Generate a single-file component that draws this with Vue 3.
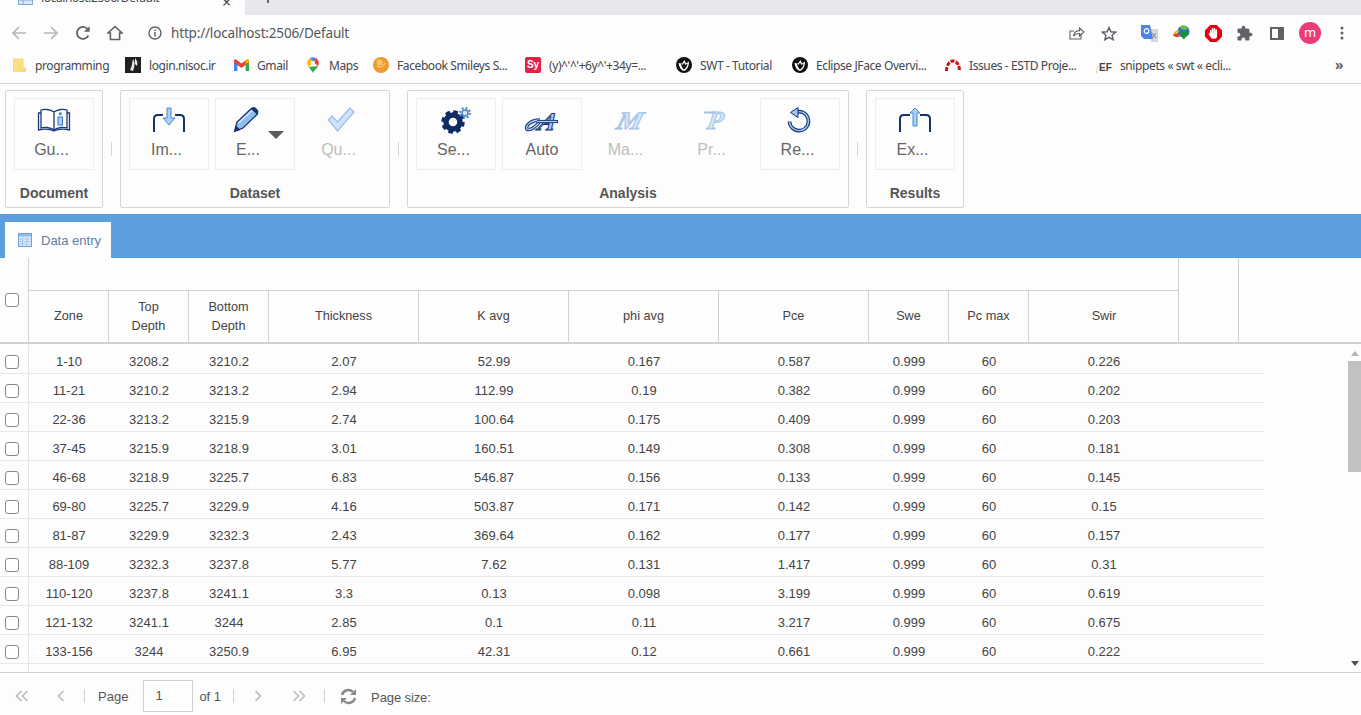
<template>
  <div class="page">
    <!-- browser chrome -->
    <div class="tabstrip">
      <div class="tab">
        <svg class="tab-fav" width="15" height="14" viewBox="0 0 15 14"><rect x="0.5" y="0.5" width="14" height="13" fill="#dbe9f8" stroke="#7fa9d8"/><path d="M5 1v12M1 5h13M1 9h13" stroke="#7fa9d8"/></svg>
        <span class="tab-title">localhost:2506/Default</span>
        <span class="tab-x">×</span>
      </div>
      <span class="tab-plus"></span>
    </div>

    <div class="toolbar">
      <svg class="tb back" width="16" height="16" viewBox="0 0 16 16"><path d="M15 8H2M8 2 2 8l6 6" fill="none" stroke="#b4b6b9" stroke-width="1.7"/></svg>
      <svg class="tb fwd" width="16" height="16" viewBox="0 0 16 16"><path d="M1 8h13M8 2l6 6-6 6" fill="none" stroke="#b4b6b9" stroke-width="1.7"/></svg>
      <svg class="tb reload" width="16" height="16" viewBox="0 0 16 16"><path d="M13.4 10.5A6 6 0 1 1 12.6 4" fill="none" stroke="#5f6368" stroke-width="1.8"/><path d="M14.6 1.2v5.6H9z" fill="#5f6368"/></svg>
      <svg class="tb home" width="16" height="16" viewBox="0 0 16 16"><path d="M8 1.5 1 8h2.4v6.5h9.2V8H15z" fill="none" stroke="#5f6368" stroke-width="1.6"/></svg>
      <svg class="tb info" width="14" height="14" viewBox="0 0 14 14"><circle cx="7" cy="7" r="6" fill="none" stroke="#5f6368" stroke-width="1.4"/><path d="M7 6v4.4M7 3.4v1.5" stroke="#5f6368" stroke-width="1.5"/></svg>
      <span class="url">http://localhost:2506/Default</span>
      <svg class="tb share" width="16" height="14" viewBox="0 0 16 14"><path d="M12 7.5v5.5H1V5h4" fill="none" stroke="#5f6368" stroke-width="1.1"/><path d="M4.5 10C5 6.5 7.5 4.6 10.5 4.6V2L15 6l-4.500 4V7.500C8.500 7.500 6 8 4.500 10z" fill="none" stroke="#5f6368" stroke-width="1.1"/></svg>
      <svg class="tb star" width="16" height="15" viewBox="0 0 16 15"><path d="m8 1.500 1.900 4.200 4.600.5-3.400 3 1 4.500L8 11.400l-4.100 2.300 1-4.500-3.400-3 4.600-.5z" fill="none" stroke="#5f6368" stroke-width="1.5"/></svg>
      <svg class="tb trans" width="17" height="17" viewBox="0 0 17 17"><path d="M7 4h10v13H10z" fill="#d4d6da"/><path d="M0 0h9l3 14H3L0 11z" fill="#4a86e8"/><circle cx="5.500" cy="6" r="2.300" fill="none" stroke="#fff" stroke-width="1.200"/><path d="M11 8l4 5M15 8l-4 5" stroke="#808488"/></svg>
      <svg class="tb idm" width="17" height="16" viewBox="0 0 17 16"><circle cx="10.500" cy="6.500" r="6" fill="#2b74b8"/><path d="M7 2c2-2 6-2 8 1l-3 2-4-1z" fill="#6fbe3c"/><path d="M0 10c1-4 4-5.500 7-4.500L5 7C3.500 7 2 8.500 2 10z" fill="#e4b422"/><path d="M0 10.500C2 8 4 8 6 8.500l.5 3C4 12.500 2 12 0 10.500z" fill="#d8482a"/><path d="M7 7h9l-5 7.500L9 12.500l-.5-3z" fill="#1f8f33"/></svg>
      <svg class="tb block" width="17" height="17" viewBox="0 0 17 17"><path d="M5.300 0h6.400L17 5.300v6.400L11.700 17H5.300L0 11.700V5.300z" fill="#e3000f"/><path d="M5.700 8V5.500M7.600 8V3.800M9.500 8V3.800M11.300 8.500V5" stroke="#fff" stroke-width="1.600" stroke-linecap="round"/><path d="M4.900 7.500h7.200v3.500a2.800 2.800 0 0 1-2.800 2.800H8c-1.200 0-2-.8-2.600-2l-2-2.800 1-.6z" fill="#fff"/></svg>
      <svg class="tb puzzle" width="17" height="17" viewBox="0 0 24 24"><path d="M20.500 11H19V7c0-1.100-.9-2-2-2h-4V3.500C13 2.120 11.880 1 10.500 1S8 2.120 8 3.500V5H4c-1.100 0-1.990.9-1.990 2v3.800H3.500c1.490 0 2.700 1.210 2.700 2.700s-1.210 2.700-2.700 2.700H2V20c0 1.100.9 2 2 2h3.800v-1.500c0-1.490 1.210-2.700 2.700-2.700 1.490 0 2.700 1.210 2.700 2.700V22H17c1.100 0 2-.9 2-2v-4h1.500c1.380 0 2.500-1.120 2.500-2.500S21.880 11 20.500 11z" fill="#5f6368"/></svg>
      <svg class="tb panel" width="14" height="13" viewBox="0 0 14 13"><rect x="1" y="1" width="12" height="11" fill="none" stroke="#5f6368" stroke-width="2"/><rect x="8" y="1" width="5" height="11" fill="#5f6368"/></svg>
      <span class="avatar">m</span>
      <svg class="tb dots" width="4" height="14" viewBox="0 0 4 14"><circle cx="2" cy="2" r="1.500" fill="#5f6368"/><circle cx="2" cy="7" r="1.500" fill="#5f6368"/><circle cx="2" cy="12" r="1.500" fill="#5f6368"/></svg>
    </div>

    <div class="bookmarks">
      <div v-for="b in bookmarks" :key="b.label" class="bm" :style="{ width: b.w + 'px' }">
        <span class="bm-icon">
          <svg v-if="b.icon === 'folder'" width="13" height="14" viewBox="0 0 13 14"><path d="M0 1h10v9h3v4H0z" fill="#fbe083" stroke="#efc968" stroke-width=".6"/></svg>
          <svg v-else-if="b.icon === 'nisoc'" width="16" height="16" viewBox="0 0 16 16"><rect width="16" height="16" fill="#1f2020"/><path d="M8 2c2 3 2 6 0 12l-3-1c2-3 2-7 3-11zM10 1c2 2 3 5 2 8l-2-2z" fill="#e8e8e8"/></svg>
          <svg v-else-if="b.icon === 'gmail'" width="15" height="12" viewBox="0 0 15 12"><path d="M0 3v9h3.400V5z" fill="#4285f4"/><path d="M11.600 5v7H15V3z" fill="#34a853"/><path d="M0 1v2.500l7.500 5.500L15 3.500V1l-1.500-1-6 4.500L1.500 0z" fill="#ea4335"/><path d="M11.600 2v3L15 3V1l-1.500-1z" fill="#fbbc04"/></svg>
          <svg v-else-if="b.icon === 'maps'" width="12" height="16" viewBox="0 0 12 16"><path d="M6 16C4.500 12 0 9.500 0 6a6 6 0 0 1 3-5l3 4-4 5z" fill="#fbbc04"/><path d="M3 1a6 6 0 0 1 6 0L6 5z" fill="#4285f4"/><path d="M9 1a6 6 0 0 1 2 8L6 5z" fill="#ea4335"/><path d="M2 10l9-1c-1 3-4 4-5 7-1-2-3-4-4-6z" fill="#34a853"/><circle cx="6" cy="5.800" r="2" fill="#fff"/></svg>
          <svg v-else-if="b.icon === 'smile'" width="16" height="16" viewBox="0 0 16 16"><circle cx="8" cy="8" r="8" fill="#f09a2e"/><circle cx="6.500" cy="5.500" r="3" fill="#f8c668"/><path d="M4 9c3 2 6 1 8-3" fill="none" stroke="#fde8b8" stroke-width="1"/></svg>
          <span v-else-if="b.icon === 'sy'" class="sy">Sy</span>
          <svg v-else-if="b.icon === 'eclipse'" width="16" height="16" viewBox="0 0 16 16"><circle cx="8" cy="8" r="8" fill="#111"/><path d="M2.500 6c.5 4 2.500 7 5.500 8 2.500-1 5-4 5-9.500L10 6.500 8.500 3 6 6.500z" fill="#fff"/><path d="M4.500 6c1 3 2 5.500 3.500 6.500 2-1.500 3.500-3.500 3.500-6L9.500 8 8 5.500 6.500 8z" fill="#111"/></svg>
          <svg v-else-if="b.icon === 'redmine'" width="16" height="14" viewBox="0 0 16 14"><path d="M1.500 13c0-6 3-10 6.500-10s6.500 4 6.500 10" fill="none" stroke="#c4161c" stroke-width="3" stroke-dasharray="4 1.300"/></svg>
          <span v-else-if="b.icon === 'ef'" class="ef">EF</span>
        </span>
        <span class="bm-label">{{ b.label }}</span>
      </div>
      <span class="bm-more">»</span>
    </div>

    <!-- ribbon -->
    <div class="ribbon">
      <section class="group">
        <div class="group-btns">
          <button class="rbtn">
            <svg class="ico" width="34" height="26" viewBox="0 0 34 26"><path d="M17 5C13 2 7 2 4 3v18c3-1 9-1 13 2 4-3 10-3 13-2V3c-3-1-9-1-13 2zM17 5v18" fill="none" stroke="#1c3a78" stroke-width="1.300"/><path d="M4 6H1.500v17C6 22 13 22 17 24c4-2 11-2 15.500-1V6H30" fill="none" stroke="#1c3a78" stroke-width="1.300"/><rect x="21" y="10" width="4.500" height="8" fill="#a9cdf2" stroke="#3f74ba"/><rect x="22" y="5.500" width="2.500" height="2.500" fill="#3f74ba"/></svg>
            <span class="cut">Gu...</span>
          </button>
        </div>
        <div class="group-name">Document</div>
      </section>
      <span class="rsep"></span>

      <section class="group">
        <div class="group-btns">
          <button class="rbtn">
            <svg class="ico" width="34" height="26" viewBox="0 0 34 26"><path d="M2 25V12q0-4 4-4h5M32 25V12q0-4-4-4h-5" fill="none" stroke="#16326e" stroke-width="2"/><path d="M15 1h4v10h4l-6 7-6-7h4z" fill="#a9d0f5" stroke="#4a8ad0"/></svg>
            <span class="cut">Im...</span>
          </button>
          <button class="rbtn">
            <svg class="ico pencil" width="28" height="26" viewBox="0 0 28 26"><path d="M1.500 24.500 4 15 18.500 1.500l6 5.500L10 21z" fill="#8fbdf0" stroke="#16326e" stroke-width="1.300"/><path d="M18.500 1.500c2-1.500 3.500-1 5 .5s2 3 .5 5" fill="#16326e" stroke="#16326e"/><path d="M1.500 24.500 3 18.500l4.500 4.500z" fill="#16326e"/><path d="M5.500 16 19 3.500" stroke="#d6e8fb" stroke-width="1.500"/></svg>
            <span class="cut-menu">E...</span>
            <span class="caret"></span>
          </button>
          <button class="rbtn off">
            <svg class="ico" width="28" height="26" viewBox="0 0 28 26"><path d="M1.500 13 5 9l5.500 6L23 1l4 4-16.500 19z" fill="#d0e4fa" stroke="#9fbfe6" stroke-width="1.300"/></svg>
            <span class="cut">Qu...</span>
          </button>
        </div>
        <div class="group-name">Dataset</div>
      </section>
      <span class="rsep"></span>

      <section class="group">
        <div class="group-btns">
          <button class="rbtn">
            <svg class="ico" width="34" height="26" viewBox="0 0 34 26"><circle cx="14" cy="15" r="7" fill="none" stroke="#0e2a63" stroke-width="5.500"/><circle cx="14" cy="15" r="10" fill="none" stroke="#0e2a63" stroke-width="3.500" stroke-dasharray="4.500 3.350"/><circle cx="26" cy="6" r="3" fill="#d6e8fb" stroke="#4a7fc0" stroke-width="1.500"/><circle cx="26" cy="6" r="5" fill="none" stroke="#4a7fc0" stroke-width="1.800" stroke-dasharray="2 1.900"/></svg>
            <span class="cut">Se...</span>
          </button>
          <button class="rbtn">
            <svg class="ico" width="36" height="26" viewBox="0 0 36 26"><path d="M16 13C8 13 1 18 3 22c3 2 9-2 13-8" fill="none" stroke="#16326e" stroke-width="3.400"/><path d="M16 13C8 13 1 18 3 22c3 2 9-2 13-8" fill="none" stroke="#a9d0f5" stroke-width="1.400"/><g transform="translate(21 23) skewX(-22)"><text x="0" y="0" class="script" font-size="25" text-anchor="middle" fill="#a9d0f5" stroke="#16326e" stroke-width="1">A</text></g><path d="M13 14.500h21" stroke="#16326e" stroke-width="3.200"/><path d="M13 14.500h20" stroke="#a9d0f5" stroke-width="1.300"/></svg>
            <span>Auto</span>
          </button>
          <button class="rbtn off">
            <svg class="ico" width="36" height="26" viewBox="0 0 36 26"><g transform="translate(18 22) skewX(-14) scale(1.150 1)"><text x="0" y="0" class="script" font-size="25" text-anchor="middle" fill="#d5e6f9" stroke="#a3c1e6" stroke-width="1">M</text></g></svg>
            <span class="cut">Ma...</span>
          </button>
          <button class="rbtn off">
            <svg class="ico" width="36" height="26" viewBox="0 0 36 26"><g transform="translate(18 22) skewX(-10)"><text x="0" y="0" class="script" font-size="26" text-anchor="middle" fill="#d5e6f9" stroke="#a3c1e6" stroke-width="1">P</text></g><path d="M8 5.500h12" stroke="#a3c1e6" stroke-width="2"/></svg>
            <span class="cut">Pr...</span>
          </button>
          <button class="rbtn">
            <svg class="ico" width="26" height="26" viewBox="0 0 26 26"><path d="M8 5.500a9.500 9.500 0 1 1-5.500 9" fill="none" stroke="#16326e" stroke-width="3.600"/><path d="M8 5.500a9.500 9.500 0 1 1-5.500 9" fill="none" stroke="#9cc6f2" stroke-width="1.400"/><path d="M11 .5v10L3.500 5.500z" fill="#9cc6f2" stroke="#16326e"/></svg>
            <span class="cut">Re...</span>
          </button>
        </div>
        <div class="group-name">Analysis</div>
      </section>
      <span class="rsep"></span>

      <section class="group">
        <div class="group-btns">
          <button class="rbtn">
            <svg class="ico" width="34" height="26" viewBox="0 0 34 26"><path d="M2 25V12q0-4 4-4h6M32 25V12q0-4-4-4h-6" fill="none" stroke="#16326e" stroke-width="2"/><path d="M17 1l5 5h-3v13h-4V6h-3z" fill="#a9d0f5" stroke="#4a8ad0"/></svg>
            <span class="cut">Ex...</span>
          </button>
        </div>
        <div class="group-name">Results</div>
      </section>
    </div>

    <!-- tabs -->
    <div class="tabbar">
      <div class="dtab">
        <svg width="14" height="14" viewBox="0 0 14 14"><rect x=".5" y=".5" width="13" height="13" fill="#dcebf9" stroke="#6ba4dc"/><rect x="1" y="1" width="12" height="2.500" fill="#8fbdea"/><path d="M1 6h12M1 8.500h12M1 11h12M4.500 3.500V13M9 3.500V13" stroke="#9ec4ea" stroke-width=".8"/></svg>
        <span>Data entry</span>
      </div>
    </div>

    <!-- grid head -->
    <div class="head">
      <div class="head-check"><span class="check"></span></div>
      <div class="head-main">
        <div class="head-band"></div>
        <div class="cols head-cols">
          <div v-for="c in columns" :key="c" class="hcell">{{ c }}</div>
        </div>
      </div>
      <div class="head-extra"></div>
      <div class="head-rest"></div>
    </div>

    <!-- grid body -->
    <div class="body">
      <div class="rows">
        <div v-for="r in rows" :key="r[0]" class="row">
          <div class="row-check"><span class="check"></span></div>
          <div class="cols">
            <div v-for="(v, i) in r" :key="i" class="cell">{{ v }}</div>
          </div>
        </div>
        <div class="row-tail"></div>
      </div>
      <div class="scroll">
        <span class="arrow-up"></span>
        <span class="thumb"></span>
        <span class="arrow-down"></span>
      </div>
    </div>

    <!-- pager -->
    <div class="pager">
      <svg class="pg first" width="14" height="12" viewBox="0 0 14 12"><path d="M6.500 1 1.500 6l5 5M12.500 1l-5 5 5 5" fill="none" stroke="#bdbdbd" stroke-width="1.700"/></svg>
      <svg class="pg prev" width="8" height="12" viewBox="0 0 8 12"><path d="M6.500 1l-5 5 5 5" fill="none" stroke="#bdbdbd" stroke-width="1.700"/></svg>
      <span class="psep s1"></span>
      <span class="ptext page-l">Page</span>
      <span class="pinput">1</span>
      <span class="ptext of">of 1</span>
      <span class="psep s2"></span>
      <svg class="pg next" width="8" height="12" viewBox="0 0 8 12"><path d="M1.500 1l5 5-5 5" fill="none" stroke="#bdbdbd" stroke-width="1.700"/></svg>
      <svg class="pg last" width="14" height="12" viewBox="0 0 14 12"><path d="M1.500 1l5 5-5 5M7.500 1l5 5-5 5" fill="none" stroke="#bdbdbd" stroke-width="1.700"/></svg>
      <span class="psep s3"></span>
      <svg class="pg refresh" width="17" height="17" viewBox="0 0 17 17"><path d="M2 7a6.500 6.500 0 0 1 11-3" fill="none" stroke="#8a8a8a" stroke-width="2.400"/><path d="M16 1v6h-6z" fill="#8a8a8a"/><path d="M15 10a6.500 6.500 0 0 1-11 3" fill="none" stroke="#8a8a8a" stroke-width="2.400"/><path d="M1 16v-6h6z" fill="#8a8a8a"/></svg>
      <span class="ptext size">Page size:</span>
    </div>
  </div>
</template>

<script setup>
const bookmarks = [
  { icon: 'folder', label: 'programming', w: 112 },
  { icon: 'nisoc', label: 'login.nisoc.ir', w: 108 },
  { icon: 'gmail', label: 'Gmail', w: 72 },
  { icon: 'maps', label: 'Maps', w: 68 },
  { icon: 'smile', label: 'Facebook Smileys S...', w: 152 },
  { icon: 'sy', label: "(y)^'^'+6y^'+34y=...", w: 151 },
  { icon: 'eclipse', label: 'SWT - Tutorial', w: 116 },
  { icon: 'eclipse', label: 'Eclipse JFace Overvi...', w: 153 },
  { icon: 'redmine', label: 'Issues - ESTD Proje...', w: 151 },
  { icon: 'ef', label: 'snippets « swt « ecli...', w: 180 },
]

const columns = ['Zone', 'Top Depth', 'Bottom Depth', 'Thickness', 'K avg', 'phi avg', 'Pce', 'Swe', 'Pc max', 'Swir']

const rows = [
  ['1-10', '3208.2', '3210.2', '2.07', '52.99', '0.167', '0.587', '0.999', '60', '0.226'],
  ['11-21', '3210.2', '3213.2', '2.94', '112.99', '0.19', '0.382', '0.999', '60', '0.202'],
  ['22-36', '3213.2', '3215.9', '2.74', '100.64', '0.175', '0.409', '0.999', '60', '0.203'],
  ['37-45', '3215.9', '3218.9', '3.01', '160.51', '0.149', '0.308', '0.999', '60', '0.181'],
  ['46-68', '3218.9', '3225.7', '6.83', '546.87', '0.156', '0.133', '0.999', '60', '0.145'],
  ['69-80', '3225.7', '3229.9', '4.16', '503.87', '0.171', '0.142', '0.999', '60', '0.15'],
  ['81-87', '3229.9', '3232.3', '2.43', '369.64', '0.162', '0.177', '0.999', '60', '0.157'],
  ['88-109', '3232.3', '3237.8', '5.77', '7.62', '0.131', '1.417', '0.999', '60', '0.31'],
  ['110-120', '3237.8', '3241.1', '3.3', '0.13', '0.098', '3.199', '0.999', '60', '0.619'],
  ['121-132', '3241.1', '3244', '2.85', '0.1', '0.11', '3.217', '0.999', '60', '0.675'],
  ['133-156', '3244', '3250.9', '6.95', '42.31', '0.12', '0.661', '0.999', '60', '0.222'],
]
</script>

<style>
html, body { margin: 0; background: #fdfdfd; overflow: hidden; }
</style>

<style scoped>
.page {
  height: 715px;
  display: flex;
  flex-direction: column;
  background: #fdfdfd;
  font-family: "Liberation Sans", Arial, sans-serif;
  color: #444;
  overflow: hidden;
}

/* browser chrome */
.tabstrip {
  height: 15px;
  flex: none;
  display: flex;
  background: #e7e8eb;
  overflow: hidden;
}
.tab {
  width: 245px;
  height: 15px;
  background: #fdfdfd;
  display: flex;
  align-items: flex-start;
  font: 12px "Noto Sans", sans-serif;
  letter-spacing: -.4px;
  color: #45484d;
  position: relative;
}
.tab-fav { margin: -9px 0 0 18px; flex: none; }
.tab-title { margin: -11px 0 0 8px; width: 181px; flex: none; white-space: nowrap; }
.tab-x { margin: -9px 0 0 0; font-size: 16px; }
.tab-plus { width: 1.5px; height: 3px; margin-left: 22px; background: #5f6368; }

.toolbar {
  height: 32px;
  flex: none;
  box-sizing: border-box;
  padding-top: 4px;
  display: flex;
  align-items: center;
  background: #fdfdfd;
}
.tb { flex: none; }
.back { margin-left: 11px; }
.fwd { margin-left: 16px; }
.reload { margin-left: 16px; }
.home { margin-left: 16px; }
.info { margin-left: 25px; }
.url {
  margin-left: 9px;
  width: 898px;
  flex: none;
  font: 13.5px "Noto Sans", sans-serif;
  letter-spacing: -.17px;
  color: #54575c;
  white-space: nowrap;
}
.share { margin-left: 0; }
.star { margin-left: 16px; }
.trans { margin-left: 24px; }
.idm { margin-left: 15px; }
.block { margin-left: 15px; }
.puzzle { margin-left: 14px; }
.panel { margin-left: 17px; }
.avatar {
  margin-left: 15px;
  width: 22px;
  height: 22px;
  flex: none;
  border-radius: 50%;
  background: #ec3b76;
  color: #fff;
  font: 13px/21px "Noto Sans", sans-serif;
  text-align: center;
}
.dots { margin-left: 19px; }

.bookmarks {
  height: 36px;
  flex: none;
  padding-left: 13px;
  display: flex;
  align-items: center;
  border-bottom: 1px solid #d2d2d2;
  background: #fdfdfd;
  position: relative;
}
.bm {
  flex: none;
  display: flex;
  align-items: center;
  font: 12px "Noto Sans", sans-serif;
  letter-spacing: -.4px;
  color: #44474c;
  white-space: nowrap;
}
.bm-icon {
  width: 16px;
  height: 16px;
  flex: none;
  margin-right: 8px;
  display: flex;
  align-items: center;
  justify-content: center;
}
.bm:first-child .bm-icon { width: 13px; margin-right: 9px; }
.sy {
  width: 16px;
  height: 16px;
  background: #e2204a;
  border-radius: 2px;
  color: #fff;
  font: bold 10px/16px "Liberation Sans", sans-serif;
  letter-spacing: 0;
  text-align: center;
}
.ef {
  font: bold 10px "Liberation Sans", sans-serif;
  letter-spacing: 0;
  color: #444;
  border-top-left-radius: 10px;
  border-left: 1px solid #f0c080;
  padding-left: 2px;
  margin-top: 4px;
}
.bm-more {
  position: absolute;
  left: 1335px;
  top: 8px;
  font: bold 14px "Noto Sans", sans-serif;
  color: #5f6368;
}

/* ribbon */
.ribbon {
  height: 130px;
  flex: none;
  box-sizing: border-box;
  padding: 6px 0 0 5px;
  display: flex;
  align-items: flex-start;
}
.group {
  height: 118px;
  box-sizing: border-box;
  border: 1px solid #d6d6d6;
  border-radius: 2px;
  padding: 7px 8px 0;
}
.group-btns { display: flex; gap: 6px; }
.group-name {
  margin-top: 15px;
  text-align: center;
  font-size: 14px;
  font-weight: bold;
  line-height: 16px;
  color: #555;
}
.rsep {
  width: 1px;
  height: 14px;
  margin: 52px 8px 0;
  background: #d6d6d6;
}
.rbtn {
  width: 80px;
  height: 72px;
  box-sizing: border-box;
  padding: 8px 0 0;
  border: 1px solid #ededed;
  background: transparent;
  display: flex;
  flex-direction: column;
  align-items: center;
  position: relative;
  font: 16px/18px "Liberation Sans", Arial, sans-serif;
  color: #666;
}
.rbtn.off { border-color: transparent; color: #bdbdbd; }
.cut { margin-right: 5px; }
.cut-menu { margin-right: 14px; }
.ico { height: 26px; margin-bottom: 8px; flex: none; overflow: visible; }
.pencil { margin-right: 17px; }
.script { font-family: "Liberation Serif", serif; font-style: italic; font-weight: bold; }
.caret {
  position: absolute;
  left: 52px;
  top: 32px;
  width: 0;
  height: 0;
  border-left: 8px solid transparent;
  border-right: 8px solid transparent;
  border-top: 8px solid #5a5a5a;
}

/* tabs */
.tabbar {
  height: 44px;
  flex: none;
  box-sizing: border-box;
  padding: 8px 0 0 5px;
  background: #5ba0dc;
}
.dtab {
  width: 106px;
  height: 36px;
  box-sizing: border-box;
  padding-left: 13px;
  display: flex;
  align-items: center;
  gap: 9px;
  background: #fdfdfd;
  font-size: 13px;
  color: #5a7fa8;
}

/* grid */
.cols {
  width: 1150px;
  display: grid;
  grid-template-columns: 80px 80px 80px 150px 150px 150px 150px 80px 80px 150px;
}
.check {
  display: block;
  width: 12px;
  height: 12px;
  border: 1px solid #8a8a8a;
  border-radius: 3px;
  background: #fff;
}
.head {
  height: 86px;
  flex: none;
  box-sizing: border-box;
  display: flex;
  border-bottom: 2px solid #d0d0d0;
}
.head-check {
  width: 29px;
  flex: none;
  box-sizing: border-box;
  padding: 35px 0 0 5px;
  border-right: 1px solid #d0d0d0;
}
.head-main {
  width: 1150px;
  flex: none;
  box-sizing: border-box;
  border-right: 1px solid #d0d0d0;
}
.head-band {
  height: 33px;
  box-sizing: border-box;
  border-bottom: 1px solid #d0d0d0;
}
.head-cols { height: 51px; width: 1149px; }
.hcell {
  display: flex;
  align-items: center;
  justify-content: center;
  box-sizing: border-box;
  padding: 0 20px;
  text-align: center;
  border-right: 1px solid #d0d0d0;
  font-size: 12.700px;
  line-height: 19px;
}
.head-cols .hcell:nth-child(9) { padding: 0; }
.head-cols .hcell:last-child { border-right: 0; }
.head-extra {
  width: 60px;
  flex: none;
  box-sizing: border-box;
  border-right: 1px solid #d0d0d0;
}
.head-rest { flex: 1; }

.body {
  flex: 1;
  min-height: 0;
  display: flex;
  justify-content: space-between;
  overflow: hidden;
  border-bottom: 1px solid #d0d0d0;
}
.rows { width: 1264px; padding-top: 1px; }
.row {
  height: 29px;
  box-sizing: border-box;
  display: flex;
  border-bottom: 1px solid #e8e8e8;
}
.row-check {
  width: 29px;
  flex: none;
  box-sizing: border-box;
  padding: 10px 0 0 5px;
  border-right: 1px solid #e6e6e6;
}
.cell {
  padding-top: 9px;
  text-align: center;
  font-size: 13px;
  line-height: 15px;
}
.row-tail { width: 29px; height: 9px; box-sizing: border-box; border-right: 1px solid #e6e6e6; }
.scroll {
  width: 13px;
  flex: none;
  display: flex;
  flex-direction: column;
  align-items: center;
  position: relative;
}
.thumb { width: 13px; height: 111px; background: #c1c1c1; margin-top: 5px; }
.arrow-up {
  width: 0;
  height: 0;
  margin-top: 7px;
  border-left: 4px solid transparent;
  border-right: 4px solid transparent;
  border-bottom: 5px solid #b4b4b4;
}
.arrow-down {
  position: absolute;
  bottom: 6px;
  width: 0;
  height: 0;
  border-left: 4px solid transparent;
  border-right: 4px solid transparent;
  border-top: 5px solid #505050;
}

/* pager */
.pager {
  height: 42px;
  flex: none;
  box-sizing: border-box;
  padding-top: 4px;
  display: flex;
  align-items: center;
  font-size: 13px;
  color: #555;
}
.pg { flex: none; }
.first { margin-left: 15px; }
.prev { margin-left: 28px; }
.psep { width: 1px; height: 14px; flex: none; background: #cfcfcf; }
.s1 { margin-left: 19px; }
.page-l { margin-left: 13px; }
.pinput {
  width: 50px;
  height: 32px;
  box-sizing: border-box;
  margin-left: 15px;
  padding-left: 11px;
  border: 1px solid #d0d0d0;
  line-height: 30px;
  flex: none;
}
.of { margin-left: 6px; }
.s2 { margin-left: 12px; }
.next { margin-left: 20px; }
.last { margin-left: 30px; }
.s3 { margin-left: 18px; }
.refresh { margin-left: 15px; }
.size { margin-left: 14px; margin-top: 3px; letter-spacing: -.1px; }
</style>
